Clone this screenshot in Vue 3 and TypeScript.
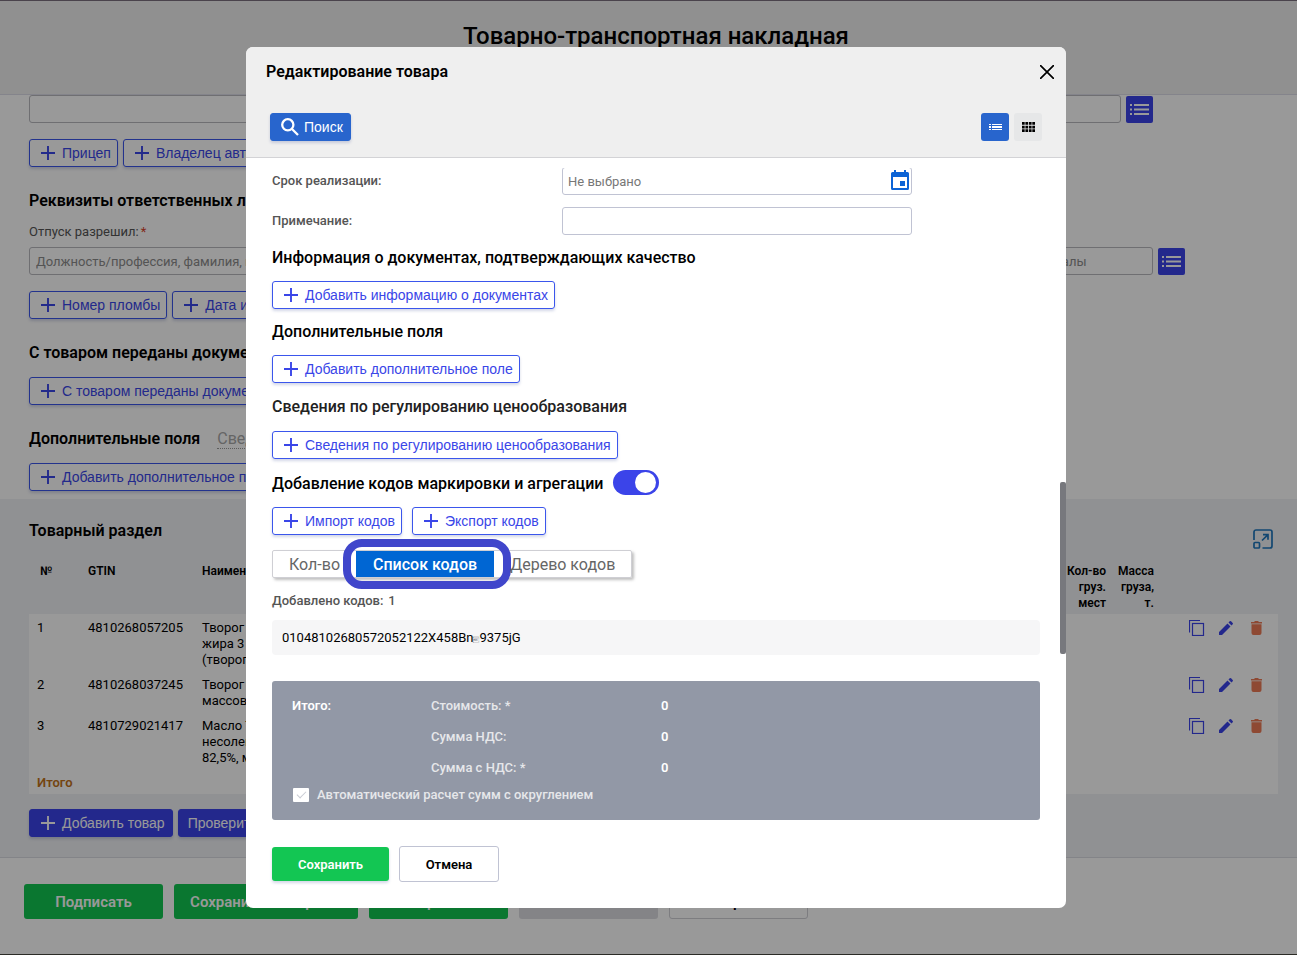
<script setup lang="ts">
import { h, ref } from 'vue'

interface Product {
  id: number
  gtin: string
  name: string[]
}

const products: Product[] = [
  { id: 1, gtin: '4810268057205', name: ['Творог', 'жира 3 %', '(творог)'] },
  { id: 2, gtin: '4810268037245', name: ['Творог', 'массовой'] },
  { id: 3, gtin: '4810729021417', name: ['Масло Тр.', 'несоленое', '82,5%, м.д.'] },
]

const totals = [
  { label: 'Стоимость: *', value: 0 },
  { label: 'Сумма НДС:', value: 0 },
  { label: 'Сумма с НДС: *', value: 0 },
]

/* Each marking code is split at its group separator */
const codes = [['01048102680572052122X458Bn', '9375jG']]
const separator = '\u001d'
const tabs = ['Кол-во', 'Список кодов', 'Дерево кодов']
const activeTab = ref('Список кодов')
const markingEnabled = ref(true)
const autoCalc = ref(true)

const PlusIcon = () =>
  h('svg', { class: 'plus', viewBox: '0 0 14 14', 'aria-hidden': 'true' }, [
    h('path', { d: 'M7 0v14M0 7h14', stroke: 'currentColor', 'stroke-width': '1.9', fill: 'none' }),
  ])

const ListIcon = () =>
  h('svg', { class: 'list-icon', viewBox: '0 0 19 11', 'aria-hidden': 'true' }, [
    h('path', {
      d: 'M0 0h2v2H0zM4 0h15v2H4zM0 4.5h2v2H0zM4 4.5h15v2H4zM0 9h2v2H0zM4 9h15v2H4z',
      fill: 'currentColor',
    }),
  ])
</script>

<template>
  <div class="page">
    <header class="page-header">
      <h1>Товарно-транспортная накладная</h1>
    </header>

    <main>
      <section class="form">
        <div class="field-row first-row">
          <input type="text" class="field" aria-label="Автомобиль" />
          <button type="button" class="list-btn" aria-label="Выбрать автомобиль"><ListIcon /></button>
        </div>
        <div class="btn-row">
          <button type="button" class="btn outline"><PlusIcon />Прицеп</button>
          <button type="button" class="btn outline"><PlusIcon />Владелец автомобиля</button>
        </div>

        <h2>Реквизиты ответственных лиц</h2>
        <label class="caption" for="allowed">Отпуск разрешил:<span class="required">*</span></label>
        <div class="field-row">
          <input id="allowed" type="text" class="field" placeholder="Должность/профессия, фамилия, инициалы" />
          <input type="text" class="field side" aria-label="Сдал грузоотправитель" placeholder="Должность/профессия, фамилия, инициалы" />
          <button type="button" class="list-btn" aria-label="Выбрать лицо"><ListIcon /></button>
        </div>
        <div class="btn-row">
          <button type="button" class="btn outline"><PlusIcon />Номер пломбы</button>
          <button type="button" class="btn outline"><PlusIcon />Дата и время</button>
        </div>

        <h2>С товаром переданы документы</h2>
        <div class="btn-row close">
          <button type="button" class="btn outline"><PlusIcon />С товаром переданы документы</button>
        </div>

        <div class="heading-row">
          <h2>Дополнительные поля</h2>
          <a href="#" class="dotted">Сведения</a>
        </div>
        <div class="btn-row close">
          <button type="button" class="btn outline"><PlusIcon />Добавить дополнительное поле</button>
        </div>
      </section>

      <section class="goods">
        <div class="goods-head">
          <h2>Товарный раздел</h2>
          <button type="button" class="icon-btn expand" aria-label="Развернуть">
            <svg viewBox="0 0 20 20" width="20" height="20" fill="none" stroke="currentColor" stroke-width="1.7">
              <path d="M1 11V3a2 2 0 0 1 2-2h14a2 2 0 0 1 2 2v14a2 2 0 0 1-2 2H9.500" />
              <rect x="1" y="13.500" width="5.500" height="5.500" rx="1" />
              <path d="M9 11.500l6-5.800M10 5.700h5v5" />
            </svg>
          </button>
        </div>

        <table>
          <thead>
            <tr>
              <th class="num" scope="col">№</th>
              <th class="gtin" scope="col">GTIN</th>
              <th scope="col">Наименование</th>
              <th class="right places" scope="col">Кол-во груз. мест</th>
              <th class="right mass" scope="col">Масса груза, т.</th>
              <th class="actions-col" aria-label="Действия"></th>
            </tr>
          </thead>
          <tbody>
            <tr v-for="item in products" :key="item.id">
              <td class="num">{{ item.id }}</td>
              <td>{{ item.gtin }}</td>
              <td><div v-for="line in item.name" :key="line">{{ line }}</div></td>
              <td></td>
              <td></td>
              <td>
                <div class="actions">
                  <button type="button" class="icon-btn" aria-label="Копировать">
                    <svg viewBox="0 0 16 16" width="16" height="16" fill="none" stroke="currentColor" stroke-width="1.2">
                      <path d="M.5 12.500V.5h10.500" />
                      <rect x="3.500" y="3.500" width="11" height="12" />
                    </svg>
                  </button>
                  <button type="button" class="icon-btn" aria-label="Изменить">
                    <svg viewBox="1 0 16 16" width="16" height="16" fill="currentColor">
                      <path d="M1 12l8.500-8.500 3 3L4 15H1zM10.500 2.500l1.200-1.200a1 1 0 0 1 1.400 0l1.600 1.600a1 1 0 0 1 0 1.400l-1.200 1.200z" />
                    </svg>
                  </button>
                  <button type="button" class="icon-btn danger" aria-label="Удалить">
                    <svg viewBox="1 0 16 16" width="16" height="16" fill="currentColor">
                      <path d="M3 2h3l1-1h3l1 1h3v1.500H3zM3.500 4.200h10V13a2 2 0 0 1-2 2h-6a2 2 0 0 1-2-2z" />
                    </svg>
                  </button>
                </div>
              </td>
            </tr>
            <tr class="total">
              <td colspan="6">Итого</td>
            </tr>
          </tbody>
        </table>

        <div class="btn-row goods-actions">
          <button type="button" class="btn solid"><PlusIcon />Добавить товар</button>
          <button type="button" class="btn solid text-only">Проверить товары</button>
        </div>
      </section>
    </main>

    <footer class="page-footer">
      <button type="button" class="foot green">Подписать</button>
      <button type="button" class="foot green wide">Сохранить и закрыть</button>
      <button type="button" class="foot green">Отправить</button>
      <button type="button" class="foot muted">Отменить</button>
      <button type="button" class="foot plain">Закрыть</button>
    </footer>
  </div>

  <div class="overlay">
    <div class="modal" role="dialog" aria-modal="true" aria-labelledby="modal-title">
      <div class="modal-header">
        <div class="modal-title-row">
          <h2 id="modal-title">Редактирование товара</h2>
          <button type="button" class="icon-btn close-btn" aria-label="Закрыть окно">
            <svg viewBox="0 0 14 14" width="14" height="14" fill="none" stroke="currentColor" stroke-width="1.7">
              <path d="M0 0l14 14M14 0L0 14" />
            </svg>
          </button>
        </div>
        <div class="toolbar">
          <button type="button" class="btn search">
            <svg viewBox="0 0 18 18" width="18" height="18" fill="none" stroke="currentColor" stroke-width="2.300">
              <circle cx="6.800" cy="6.800" r="5.600" />
              <path d="M11 11l6 6" />
            </svg>
            Поиск
          </button>
          <div class="view-switch">
            <button type="button" class="view active" aria-label="Списком">
              <svg viewBox="0 0 13 7" width="13" height="7" fill="currentColor">
                <path d="M0 0h2v1H0zM3 0h10v1H3zM0 2h2v2H0zM3 2h10v2H3zM0 5h2v1H0zM3 5h10v1H3z" />
              </svg>
            </button>
            <button type="button" class="view" aria-label="Сеткой">
              <svg viewBox="0 0 13 10" width="13" height="10" fill="currentColor">
                <path d="M0 0h2.700v2.700H0zM3.400 0H6.100v2.700H3.400zM6.900 0h2.700v2.700H6.900zM10.300 0H13v2.700h-2.700zM0 3.700h2.700v2.700H0zM3.400 3.700H6.100v2.700H3.400zM6.900 3.700h2.700v2.700H6.900zM10.300 3.700H13v2.700h-2.700zM0 7.300h2.700V10H0zM3.400 7.300H6.100V10H3.400zM6.900 7.300h2.700V10H6.900zM10.300 7.300H13V10h-2.700z" />
              </svg>
            </button>
          </div>
        </div>
      </div>

      <div class="modal-body">
        <div class="form-line">
          <label for="shelf">Срок реализации:</label>
          <div class="date-field">
            <input id="shelf" type="text" placeholder="Не выбрано" />
            <button type="button" class="icon-btn calendar" aria-label="Открыть календарь">
              <svg viewBox="0 0 18 20" width="18" height="20" fill="currentColor">
                <path fill-rule="evenodd" d="M3 0h2v2h8V0h2v2h1.500A1.500 1.500 0 0 1 18 3.500v15a1.500 1.500 0 0 1-1.500 1.500h-15A1.500 1.500 0 0 1 0 18.500v-15A1.500 1.500 0 0 1 1.500 2H3zM2 7v11h14V7z" />
                <path d="M9 11h5v5H9z" />
              </svg>
            </button>
          </div>
        </div>
        <div class="form-line">
          <label for="note">Примечание:</label>
          <input id="note" type="text" />
        </div>

        <h3>Информация о документах, подтверждающих качество</h3>
        <button type="button" class="btn outline"><PlusIcon />Добавить информацию о документах</button>

        <h3>Дополнительные поля</h3>
        <button type="button" class="btn outline"><PlusIcon />Добавить дополнительное поле</button>

        <h3 class="soft">Сведения по регулированию ценообразования</h3>
        <button type="button" class="btn outline"><PlusIcon />Сведения по регулированию ценообразования</button>

        <div class="switch-row">
          <h3><label for="marking">Добавление кодов маркировки и агрегации</label></h3>
          <input id="marking" v-model="markingEnabled" type="checkbox" class="switch" />
        </div>
        <div class="code-actions">
          <button type="button" class="btn outline"><PlusIcon />Импорт кодов</button>
          <button type="button" class="btn outline"><PlusIcon />Экспорт кодов</button>
        </div>

        <div class="tabs" role="tablist">
          <button
            v-for="tab in tabs"
            :key="tab"
            type="button"
            role="tab"
            class="tab"
            :class="{ active: tab === activeTab }"
            :aria-selected="tab === activeTab"
            @click="activeTab = tab"
          >
            {{ tab }}
          </button>
        </div>

        <p class="count"><span>Добавлено кодов:</span><span>{{ codes.length }}</span></p>
        <div v-for="code in codes" :key="code[0]" class="code">{{ code[0] }}<span class="separator">{{ separator }}</span>{{ code[1] }}</div>

        <div class="summary">
          <div class="summary-grid">
            <strong class="summary-title">Итого:</strong>
            <template v-for="row in totals" :key="row.label">
              <span class="summary-label">{{ row.label }}</span>
              <strong class="summary-value">{{ row.value }}</strong>
            </template>
          </div>
          <label class="auto"><input v-model="autoCalc" type="checkbox" />Автоматический расчет сумм с округлением</label>
        </div>

        <div class="modal-actions">
          <button type="button" class="save">Сохранить</button>
          <button type="button" class="cancel">Отмена</button>
        </div>
      </div>
      <div class="scroll-thumb"></div>
    </div>
  </div>
</template>

<style>
html,
body {
  margin: 0;
  overflow: hidden;
  background: #fff;
}
</style>

<style scoped>
* {
  box-sizing: border-box;
}

.page,
.overlay {
  font-family: Roboto, 'Liberation Sans', sans-serif;
  font-size: 13px;
  line-height: 16px;
  color: #000;
}

button,
input {
  font: inherit;
  margin: 0;
}

button {
  cursor: pointer;
}

h1,
h2,
h3,
p {
  margin: 0;
}

h2,
h3 {
  font-size: 16px;
  line-height: 20px;
  font-weight: 600;
}

.page {
  min-height: 100vh;
  display: flex;
  flex-direction: column;
}

.page-header {
  padding: 21px 0 42px 15px;
  background: #f1f1f1;
  border-bottom: 1px solid #dcdce8;
  text-align: center;
}

h1 {
  font-size: 24px;
  line-height: 31px;
  font-weight: 500;
}

.form {
  padding: 0 112px 8px 29px;
}

.field-row {
  display: flex;
  align-items: flex-end;
  gap: 5px;
}

.first-row {
  padding-right: 32px;
}

.field {
  flex: 1;
  min-width: 0;
  height: 28px;
  padding: 0 6px;
  border: 1px solid #b9b9bf;
  border-radius: 3px;
  background: transparent;
}

.side {
  flex: 0 0 345px;
}

.field::placeholder {
  color: #8c8c8c;
}

.list-btn {
  display: grid;
  place-items: center;
  width: 27px;
  height: 27px;
  padding: 0;
  border: 0;
  border-radius: 2px;
  background: #3b44e9;
  color: #fff;
}

.list-icon {
  width: 19px;
  height: 11px;
}

.btn-row {
  display: flex;
  gap: 5px;
  margin: 16px 0 24px;
}

.btn-row.close {
  margin: 14px 0 24px;
}

.form > .btn-row:last-child {
  margin-bottom: 0;
}

.btn {
  display: inline-flex;
  align-items: center;
  height: 28px;
  padding: 0 6px 0 11px;
  border: 1px solid #3b56ec;
  border-radius: 3px;
  font-family: 'Liberation Sans', Arial, sans-serif;
  font-size: 14px;
  line-height: 16px;
  white-space: nowrap;
  box-shadow: 0 2px 3px rgba(40, 60, 140, 0.2);
}

.plus {
  width: 14px;
  height: 14px;
  margin-right: 7px;
}

.outline {
  background: transparent;
  color: #3a46e8;
}

.solid {
  padding: 0 7px 0 11px;
  border-color: #3b44e9;
  background: #3b44e9;
  color: #fff;
}

.text-only {
  padding: 0 9px;
}

.caption {
  display: block;
  margin: 13px 0 7px;
  color: #555;
}

.required {
  margin-left: 2px;
  color: #d9442b;
}

.heading-row {
  display: flex;
  gap: 17px;
}

.dotted {
  color: #a8a8a8;
  font-size: 16px;
  line-height: 19px;
  text-decoration: none;
  border-bottom: 1px dotted #999;
}

.goods {
  padding: 22px 19px 20px 29px;
  background: #f0f2f5;
  border-bottom: 1px solid #dadce3;
}

.goods-head {
  display: flex;
  justify-content: space-between;
  padding-right: 5px;
}

.icon-btn {
  display: grid;
  place-items: center;
  padding: 0;
  border: 0;
  background: none;
  color: #3b44e9;
}

.expand {
  margin-top: 8px;
  color: #1f77bd;
}

table {
  width: 100%;
  margin-top: 14px;
  border-collapse: collapse;
  table-layout: fixed;
}

th {
  padding: 0 8px 3px 0;
  font-size: 12px;
  font-weight: 600;
  text-align: left;
  vertical-align: top;
}

td {
  padding: 6px 8px 3px 0;
  vertical-align: top;
}

tbody {
  background: #fff;
}

.num {
  width: 59px;
  padding-left: 8px;
}

th.num {
  padding-left: 11px;
}

.gtin {
  width: 114px;
}

.right {
  text-align: right;
}

th.places {
  width: 56px;
  padding-right: 8px;
}

th.mass {
  width: 48px;
  padding-left: 0;
}

.actions-col {
  width: 116px;
}

.actions {
  display: flex;
  gap: 14px;
  padding-left: 27px;
}

.danger {
  color: #ed7b55;
}

.total td {
  padding-left: 8px;
  color: #c2731b;
  font-weight: 600;
}

.goods-actions {
  margin: 15px 0 0;
}

.page-footer {
  display: flex;
  gap: 11px;
  padding: 26px 24px 0;
}

.foot {
  width: 139px;
  height: 35px;
  border: 0;
  border-radius: 3px;
  font-size: 15px;
  font-weight: 600;
}

.foot.wide {
  width: 184px;
}

.green {
  background: #11c650;
  color: #fff;
}

.muted {
  background: #dcdce2;
  color: #fff;
}

.plain {
  border: 1px solid #d0d0d6;
  background: #fff;
}

.overlay {
  position: fixed;
  inset: 0;
  display: flex;
  align-items: center;
  justify-content: center;
  padding: 46px 0 46px 15px;
  border-top: 1px solid #4a434c;
  border-bottom: 1px solid #2b2b26;
  background: rgba(0, 0, 0, 0.4);
}

.modal {
  position: relative;
  display: flex;
  flex-direction: column;
  width: 820px;
  max-width: 96%;
  max-height: 100%;
  overflow: hidden;
  border-radius: 7px;
  background: #fff;
}

.modal-header {
  padding: 15px 24px 16px 20px;
  background: #efefef;
  border-bottom: 1px solid #d3d3d6;
}

.modal-title-row {
  display: flex;
  align-items: center;
  justify-content: space-between;
  margin-right: -12px;
}

.close-btn {
  width: 14px;
  height: 20px;
  color: #000;
}

.toolbar {
  display: flex;
  justify-content: space-between;
  padding: 31px 0 0 4px;
}

.search {
  gap: 5px;
  padding: 0 7px 0 10px;
  border-color: #2865cd;
  background: #2865cd;
  color: #fff;
}

.view-switch {
  display: flex;
  gap: 5px;
}

.view {
  display: grid;
  place-items: center;
  width: 28px;
  height: 28px;
  padding: 0;
  border: 0;
  border-radius: 3px;
  background: #e6e7e8;
  color: #000;
}

.view.active {
  background: #2865cd;
  color: #fff;
}

.modal-body {
  margin-top: 10px;
  padding: 0 26px 26px;
  overflow: hidden;
}

.form-line {
  display: grid;
  grid-template-columns: 290px 350px;
  align-items: center;
  margin-bottom: 12px;
}

.form-line:first-child {
  margin-top: -1px;
}

.form-line label,
.count {
  color: #555;
  font-weight: 500;
}

.form-line input {
  width: 100%;
  height: 28px;
  padding: 0 5px;
  border: 1px solid #c0c3d3;
  border-radius: 3px;
  background: #fff;
}

.form-line input::placeholder {
  color: #777;
}

.date-field {
  position: relative;
}

.calendar {
  position: absolute;
  top: 3px;
  right: 3px;
  color: #0b63d6;
}

.modal-body h3 {
  margin: 13px 0;
  font-weight: 500;
}

.modal-body > .btn {
  display: flex;
}

.modal-body h3.soft {
  margin: 14px 0;
  color: #222;
}

.switch-row {
  display: flex;
  align-items: center;
  gap: 10px;
  margin: 11px 0 12px;
}

.modal-body .switch-row h3 {
  margin: 2px 0 0;
}

.switch {
  appearance: none;
  display: flex;
  align-items: center;
  justify-content: flex-end;
  width: 46px;
  height: 25px;
  padding: 0 3px;
  border-radius: 13px;
  background: #3b44e9;
}

.switch::after {
  content: '';
  width: 21px;
  height: 21px;
  border-radius: 50%;
  background: #fff;
}

.code-actions {
  display: flex;
  gap: 10px;
}

.tabs {
  display: inline-flex;
  height: 28px;
  margin-top: 15px;
  border: 1px solid #cfcfd4;
  border-radius: 2px;
  box-shadow: 2px 2px 3px rgba(0, 0, 0, 0.25);
}

.tab {
  position: relative;
  padding: 1px 16px 0;
  border: 0;
  background: none;
  color: #666;
  font-size: 16px;
  line-height: 26px;
}

.tab.active {
  padding: 1px 17px 0;
  background: #0066d3;
  color: #fff;
  font-weight: 500;
}

.tab.active::after {
  content: '';
  position: absolute;
  inset: -12px -17px -12px -13px;
  border: 8px solid #4046cb;
  border-radius: 19px;
}

.count {
  display: flex;
  gap: 5px;
  margin: 15px 0 11px;
}

.code {
  padding: 10px 10px 9px;
  border-radius: 4px;
  background: #f6f6f7;
}

.separator {
  font-size: 6px;
  line-height: 6px;
}

.summary {
  margin-top: 26px;
  padding: 17px 20px;
  border-radius: 3px;
  background: #9298a6;
  color: #fff;
}

.summary-grid {
  display: grid;
  grid-template-columns: 139px 230px 1fr;
  row-gap: 15px;
}

.summary-title {
  grid-row: span 3;
}

.summary-label,
.auto {
  color: #e6e7ea;
  font-weight: 500;
}

.summary strong {
  font-weight: 600;
}

.auto {
  display: flex;
  align-items: center;
  gap: 8px;
  margin-top: 11px;
}

.auto input {
  appearance: none;
  display: grid;
  place-items: center;
  width: 16px;
  height: 14px;
  margin-left: 1px;
  border-radius: 1px;
  background: #fff;
}

.auto input:checked::after {
  content: '';
  width: 8px;
  height: 4px;
  margin-bottom: 3px;
  border: solid #c9cbd3;
  border-width: 0 0 1px 1px;
  rotate: -45deg;
}

.modal-actions {
  display: flex;
  align-items: center;
  gap: 10px;
  margin-top: 26px;
}

.save,
.cancel {
  height: 34px;
  padding: 2px 0 0;
  border-radius: 3px;
  font-weight: 600;
}

.save {
  width: 117px;
  border: 0;
  background: #13c653;
  color: #fff;
  box-shadow: 0 2px 3px rgba(40, 60, 140, 0.2);
}

.cancel {
  width: 100px;
  height: 36px;
  border: 1px solid #c0c3d3;
  background: #fff;
  color: #000;
}

.scroll-thumb {
  position: absolute;
  right: 0;
  top: 435px;
  width: 6px;
  height: 172px;
  border-radius: 2px;
  background: #77787d;
}
</style>
